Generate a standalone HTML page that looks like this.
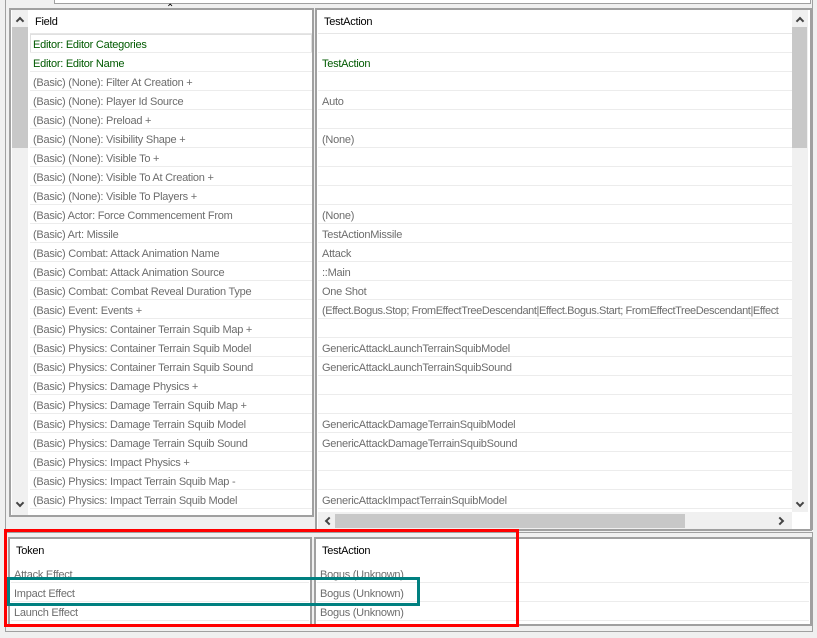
<!DOCTYPE html>
<html><head><meta charset="utf-8"><style>
*{margin:0;padding:0;box-sizing:border-box}
body{width:817px;height:638px;background:#f0f0f0;position:relative;overflow:hidden;font-family:"Liberation Sans",Arial,sans-serif;font-size:11px;letter-spacing:-0.25px;color:#6d6d6d}
.a{position:absolute}
.frame{border:1px solid #a0a0a0;background:#fff}
.row{position:absolute;height:19px;line-height:22px;border-bottom:1px solid #ececec;white-space:nowrap;overflow:hidden}
.g{color:#005a00}
.k{color:#000}
.chev{position:absolute;width:6px;height:6px;border-left:2px solid #444;border-top:2px solid #444}
</style></head><body>
<div class="a" style="left:54px;top:-2px;width:757px;height:6px;border:1px solid #a0a0a0;background:#fff"></div>
<div class="a" style="left:5px;top:0;width:1px;height:530px;background:#a0a0a0"></div>
<div class="a" style="left:812px;top:0;width:1px;height:530px;background:#a0a0a0"></div>

<div class="a frame" style="left:9px;top:8px;width:305px;height:509px;border:2px double #a0a0a0"></div>
<div class="a" style="left:12px;top:10px;width:16px;height:505px;background:#f0f0f0"></div>
<div class="a" style="left:12px;top:27px;width:16px;height:121px;background:#c8c8c8"></div>
<div class="chev" style="left:17px;top:18px;transform:rotate(45deg)"></div>
<div class="chev" style="left:17px;top:500px;transform:rotate(225deg)"></div>
<div class="a k" style="left:35px;top:16px">Field</div>
<div class="a k" style="left:166px;top:3px;font-size:10px">&#8963;</div>
<div class="a" style="left:30px;top:33px;width:282px;height:1px;background:#e6e6e6"></div>
<div class="a" style="left:30px;top:34px;width:282px;height:19px;border:1px solid #e0e0e0"></div>

<div class="a frame" style="left:315px;top:8px;width:497px;height:523px;border:2px double #a0a0a0"></div>
<div class="a k" style="left:324px;top:16px">TestAction</div>
<div class="a" style="left:318px;top:33px;width:474px;height:1px;background:#e6e6e6"></div>
<div class="a" style="left:792px;top:10px;width:16px;height:502px;background:#f0f0f0"></div>
<div class="a" style="left:792px;top:27px;width:15px;height:121px;background:#c8c8c8"></div>
<div class="chev" style="left:797px;top:18px;transform:rotate(45deg)"></div>
<div class="chev" style="left:797px;top:500px;transform:rotate(225deg)"></div>
<div class="a" style="left:318px;top:512px;width:474px;height:17px;background:#f0f0f0"></div>
<div class="a" style="left:335px;top:514px;width:350px;height:14px;background:#c8c8c8"></div>
<div class="chev" style="left:326px;top:518px;transform:rotate(-45deg)"></div>
<div class="chev" style="left:777px;top:518px;transform:rotate(135deg)"></div>

<div class="row g" style="left:30px;top:34px;width:282px;padding-left:3px">Editor: Editor Categories</div>
<div class="row g" style="left:30px;top:53px;width:282px;padding-left:3px">Editor: Editor Name</div>
<div class="row" style="left:30px;top:72px;width:282px;padding-left:3px">(Basic) (None): Filter At Creation +</div>
<div class="row" style="left:30px;top:91px;width:282px;padding-left:3px">(Basic) (None): Player Id Source</div>
<div class="row" style="left:30px;top:110px;width:282px;padding-left:3px">(Basic) (None): Preload +</div>
<div class="row" style="left:30px;top:129px;width:282px;padding-left:3px">(Basic) (None): Visibility Shape +</div>
<div class="row" style="left:30px;top:148px;width:282px;padding-left:3px">(Basic) (None): Visible To +</div>
<div class="row" style="left:30px;top:167px;width:282px;padding-left:3px">(Basic) (None): Visible To At Creation +</div>
<div class="row" style="left:30px;top:186px;width:282px;padding-left:3px">(Basic) (None): Visible To Players +</div>
<div class="row" style="left:30px;top:205px;width:282px;padding-left:3px">(Basic) Actor: Force Commencement From</div>
<div class="row" style="left:30px;top:224px;width:282px;padding-left:3px">(Basic) Art: Missile</div>
<div class="row" style="left:30px;top:243px;width:282px;padding-left:3px">(Basic) Combat: Attack Animation Name</div>
<div class="row" style="left:30px;top:262px;width:282px;padding-left:3px">(Basic) Combat: Attack Animation Source</div>
<div class="row" style="left:30px;top:281px;width:282px;padding-left:3px">(Basic) Combat: Combat Reveal Duration Type</div>
<div class="row" style="left:30px;top:300px;width:282px;padding-left:3px">(Basic) Event: Events +</div>
<div class="row" style="left:30px;top:319px;width:282px;padding-left:3px">(Basic) Physics: Container Terrain Squib Map +</div>
<div class="row" style="left:30px;top:338px;width:282px;padding-left:3px">(Basic) Physics: Container Terrain Squib Model</div>
<div class="row" style="left:30px;top:357px;width:282px;padding-left:3px">(Basic) Physics: Container Terrain Squib Sound</div>
<div class="row" style="left:30px;top:376px;width:282px;padding-left:3px">(Basic) Physics: Damage Physics +</div>
<div class="row" style="left:30px;top:395px;width:282px;padding-left:3px">(Basic) Physics: Damage Terrain Squib Map +</div>
<div class="row" style="left:30px;top:414px;width:282px;padding-left:3px">(Basic) Physics: Damage Terrain Squib Model</div>
<div class="row" style="left:30px;top:433px;width:282px;padding-left:3px">(Basic) Physics: Damage Terrain Squib Sound</div>
<div class="row" style="left:30px;top:452px;width:282px;padding-left:3px">(Basic) Physics: Impact Physics +</div>
<div class="row" style="left:30px;top:471px;width:282px;padding-left:3px">(Basic) Physics: Impact Terrain Squib Map -</div>
<div class="row" style="left:30px;top:490px;width:282px;padding-left:3px">(Basic) Physics: Impact Terrain Squib Model</div>

<div class="row" style="left:318px;top:34px;width:474px"></div>
<div class="row g" style="left:318px;top:53px;width:474px;padding-left:4px">TestAction</div>
<div class="row" style="left:318px;top:72px;width:474px"></div>
<div class="row" style="left:318px;top:91px;width:474px;padding-left:4px">Auto</div>
<div class="row" style="left:318px;top:110px;width:474px"></div>
<div class="row" style="left:318px;top:129px;width:474px;padding-left:4px">(None)</div>
<div class="row" style="left:318px;top:148px;width:474px"></div>
<div class="row" style="left:318px;top:167px;width:474px"></div>
<div class="row" style="left:318px;top:186px;width:474px"></div>
<div class="row" style="left:318px;top:205px;width:474px;padding-left:4px">(None)</div>
<div class="row" style="left:318px;top:224px;width:474px;padding-left:4px">TestActionMissile</div>
<div class="row" style="left:318px;top:243px;width:474px;padding-left:4px">Attack</div>
<div class="row" style="left:318px;top:262px;width:474px;padding-left:4px">::Main</div>
<div class="row" style="left:318px;top:281px;width:474px;padding-left:4px">One Shot</div>
<div class="row" style="left:318px;top:300px;width:474px;padding-left:4px;letter-spacing:-0.4px">(Effect.Bogus.Stop; FromEffectTreeDescendant|Effect.Bogus.Start; FromEffectTreeDescendant|Effect</div>
<div class="row" style="left:318px;top:319px;width:474px"></div>
<div class="row" style="left:318px;top:338px;width:474px;padding-left:4px">GenericAttackLaunchTerrainSquibModel</div>
<div class="row" style="left:318px;top:357px;width:474px;padding-left:4px">GenericAttackLaunchTerrainSquibSound</div>
<div class="row" style="left:318px;top:376px;width:474px"></div>
<div class="row" style="left:318px;top:395px;width:474px"></div>
<div class="row" style="left:318px;top:414px;width:474px;padding-left:4px">GenericAttackDamageTerrainSquibModel</div>
<div class="row" style="left:318px;top:433px;width:474px;padding-left:4px">GenericAttackDamageTerrainSquibSound</div>
<div class="row" style="left:318px;top:452px;width:474px"></div>
<div class="row" style="left:318px;top:471px;width:474px"></div>
<div class="row" style="left:318px;top:490px;width:474px;padding-left:4px">GenericAttackImpactTerrainSquibModel</div>

<div class="a" style="left:5px;top:532px;width:808px;height:100px;border:1px solid #a0a0a0"></div>
<div class="a frame" style="left:8px;top:537px;width:304px;height:89px;border:2px double #a0a0a0"></div>
<div class="a frame" style="left:314px;top:537px;width:498px;height:89px;border:2px double #a0a0a0"></div>
<div class="a k" style="left:16px;top:545px">Token</div>
<div class="a k" style="left:322px;top:545px">TestAction</div>
<div class="row" style="left:11px;top:564px;width:298px;padding-left:3px">Attack Effect</div>
<div class="row" style="left:11px;top:583px;width:298px;padding-left:3px">Impact Effect</div>
<div class="row" style="left:11px;top:602px;width:298px;padding-left:3px">Launch Effect</div>
<div class="row" style="left:317px;top:564px;width:492px;padding-left:3px">Bogus (Unknown)</div>
<div class="row" style="left:317px;top:583px;width:492px;padding-left:3px">Bogus (Unknown)</div>
<div class="row" style="left:317px;top:602px;width:492px;padding-left:3px">Bogus (Unknown)</div>

<div class="a" style="left:4px;top:529px;width:515px;height:98px;border:3px solid #ff0000"></div>
<div class="a" style="left:7px;top:577px;width:413px;height:29px;border:3px solid #008080"></div>
</body></html>
